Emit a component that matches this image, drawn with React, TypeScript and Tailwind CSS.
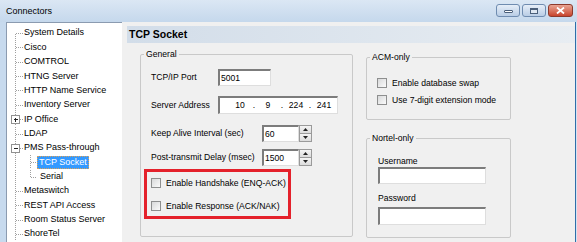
import React from "react";

type TreeItem = {
  label: string;
  box?: "+" | "-";
  child?: boolean;
  last?: boolean;
  selected?: boolean;
};

const TREE: TreeItem[] = [
  { label: "System Details" },
  { label: "Cisco" },
  { label: "COMTROL" },
  { label: "HTNG Server" },
  { label: "HTTP Name Service" },
  { label: "Inventory Server" },
  { label: "IP Office", box: "+" },
  { label: "LDAP" },
  { label: "PMS Pass-through", box: "-" },
  { label: "TCP Socket", child: true, selected: true },
  { label: "Serial", child: true, last: true },
  { label: "Metaswitch" },
  { label: "REST API Access" },
  { label: "Room Status Server" },
  { label: "ShoreTel" },
];

const ROW_H = 14.36;
const DOT = "#a0a0a0";

function TreeGutter({ item, first }: { item: TreeItem; first: boolean }) {
  const mid = 7.5;
  const w = item.child ? 30 : 17;
  return (
    <svg width={w} height={ROW_H} className="shrink-0" shapeRendering="crispEdges">
      <line x1={8.5} y1={first ? mid : 0} x2={8.5} y2={ROW_H} stroke={DOT} strokeDasharray="1 1" />
      {item.child ? (
        <>
          <line x1={23.5} y1={0} x2={23.5} y2={item.last ? mid : ROW_H} stroke={DOT} strokeDasharray="1 1" />
          <line x1={24} y1={mid} x2={30} y2={mid} stroke={DOT} strokeDasharray="1 1" />
        </>
      ) : (
        <line x1={item.box ? 13 : 9} y1={mid} x2={16} y2={mid} stroke={DOT} strokeDasharray="1 1" />
      )}
      {item.box && (
        <>
          <rect x={4.5} y={3.5} width={8} height={8} fill="#fff" stroke="#919191" />
          <line x1={6.5} y1={7.5} x2={11} y2={7.5} stroke="#222" />
          {item.box === "+" && <line x1={8.5} y1={5.5} x2={8.5} y2={10} stroke="#222" />}
        </>
      )}
    </svg>
  );
}

function TextBox({ value, className }: { value?: string; className: string }) {
  return (
    <div
      className={`flex items-center bg-white border-t-2 border-l-2 border-b border-r border-t-[#7c7c7c] border-l-[#7c7c7c] border-b-[#dedede] border-r-[#dedede] pl-[1px] ${className}`}
    >
      {value}
    </div>
  );
}

function Spinner() {
  const btn =
    "flex h-1/2 items-center justify-center bg-linear-to-b from-[#f4f4f4] to-[#dcdcdc] border border-[#9a9a9a]";
  return (
    <div className="flex h-full w-[13px] flex-col">
      <div className={btn}>
        <svg width="5" height="3" viewBox="0 0 5 3">
          <path d="M2.5 0L5 3H0z" fill="#222" />
        </svg>
      </div>
      <div className={`${btn} border-t-0`}>
        <svg width="5" height="3" viewBox="0 0 5 3">
          <path d="M0 0h5L2.5 3z" fill="#222" />
        </svg>
      </div>
    </div>
  );
}

function CheckBox({ label }: { label: string }) {
  return (
    <div className="flex h-[12px] items-center gap-[5px]">
      <div className="h-[10px] w-[10px] shrink-0 border border-[#8e8f8f] bg-linear-to-br from-[#d8d9da] to-[#fbfbfb]" />
      <span>{label}</span>
    </div>
  );
}

export default function App() {
  return (
    <div className="flex h-[242px] w-[577px] flex-col overflow-hidden bg-[#c7daee] font-['Liberation_Sans',Arial,sans-serif] text-black">
      {/* title bar */}
      <div className="flex h-[22px] shrink-0 items-center justify-between bg-linear-to-b from-[#dbe7f4] to-[#c5d8ec] pl-[6px] pr-[4px]">
        <span className="text-[9px] leading-none">Connectors</span>
        <div className="mt-[-1px] flex gap-[2px]">
          <div className="flex h-[13px] w-[24px] items-end justify-center rounded-[3px] border border-[#6f8cb0] bg-linear-to-b from-[#e6eef8] to-[#b9cde5] pb-[3px]">
            <div className="h-[3px] w-[9px] rounded-[1px] border border-[#4a5f7a] bg-white" />
          </div>
          <div className="flex h-[13px] w-[24px] items-center justify-center rounded-[3px] border border-[#6f8cb0] bg-linear-to-b from-[#e6eef8] to-[#b9cde5]">
            <div className="h-[6px] w-[8px] border border-[#4a5f7a] border-t-2 bg-[#dfe8f2]" />
          </div>
          <div className="flex h-[13px] w-[25px] items-center justify-center rounded-[3px] border border-[#8d3a2c] bg-linear-to-b from-[#e8a493] to-[#c7432c]">
            <svg width="9" height="7" viewBox="0 0 9 7">
              <path d="M1 0.5L8 6.5M8 0.5L1 6.5" stroke="#fff" strokeWidth="1.8" />
            </svg>
          </div>
        </div>
      </div>

      <div className="flex min-h-0 flex-1 pl-[6px]">
        {/* tree */}
        <div className="w-[116px] shrink-0 border-l border-t border-[#8b9bb0] bg-white pt-[3px] text-[9px]">
          {TREE.map((item, i) => (
            <div key={item.label} className="flex items-center" style={{ height: ROW_H }}>
              <TreeGutter item={item} first={i === 0} />
              {item.selected ? (
                <span className="flex h-[13px] items-center bg-[#3399ff] px-[2px] text-white outline-1 outline-dotted outline-[#d9a15a] -outline-offset-1">
                  {item.label}
                </span>
              ) : (
                <span className={item.child ? "pl-[3px]" : ""}>{item.label}</span>
              )}
            </div>
          ))}
        </div>

        {/* right panel */}
        <div className="flex min-w-0 flex-1 flex-col bg-[#f0f0f0] text-[8.6px] leading-none">
          <div className="ml-[5px] mt-[4px] flex h-[17px] shrink-0 items-center bg-linear-to-r from-[#d2dde9] to-[#e8edf2] pl-[2px] text-[10.5px] font-bold">
            TCP Socket
          </div>

          <div className="flex items-start pl-[18px] pt-[6px]">
            {/* General */}
            <fieldset className="w-[213px] shrink-0 rounded-[2px] border border-[#c9c9c9] px-[3px] pb-[17px]">
              <legend className="h-[10px] px-[2px] leading-[10px]">General</legend>
              <div className="flex flex-col pl-[7px]">
                <div className="mt-[10px] flex h-[17px] items-center">
                  <span className="w-[67px]">TCP/IP Port</span>
                  <TextBox value="5001" className="h-full w-[53px]" />
                </div>
                <div className="mt-[10px] flex h-[18px] items-center">
                  <span className="w-[67px]">Server Address</span>
                  <div className="flex h-full w-[120px] items-center border-t-2 border-l-2 border-b border-r border-t-[#7c7c7c] border-l-[#7c7c7c] border-b-[#dedede] border-r-[#dedede] bg-white pl-[8px]">
                    <span className="w-[24px] text-center">10</span>
                    <span className="w-[4px] text-center">.</span>
                    <span className="w-[24px] text-center">9</span>
                    <span className="w-[4px] text-center">.</span>
                    <span className="w-[24px] text-center">224</span>
                    <span className="w-[4px] text-center">.</span>
                    <span className="w-[24px] text-center">241</span>
                  </div>
                </div>
                <div className="mt-[11px] flex h-[17px] items-center">
                  <span className="w-[111px]">Keep Alive Interval (sec)</span>
                  <TextBox value="60" className="h-full w-[37px]" />
                  <Spinner />
                </div>
                <div className="mt-[7px] flex h-[17px] items-center">
                  <span className="w-[111px]">Post-transmit Delay (msec)</span>
                  <TextBox value="1500" className="h-full w-[37px]" />
                  <Spinner />
                </div>
                <div className="ml-[-7px] mt-[3px] flex h-[50px] w-[147px] flex-col gap-[11px] border-[3px] border-[#e4212b] pl-[4px] pt-[5px]">
                  <CheckBox label="Enable Handshake (ENQ-ACK)" />
                  <CheckBox label="Enable Response (ACK/NAK)" />
                </div>
              </div>
            </fieldset>

            <div className="ml-[13px] flex w-[145px] shrink-0 flex-col pt-[3px]">
              {/* ACM-only */}
              <fieldset className="rounded-[2px] border border-[#c9c9c9] px-[3px] pb-[13px]">
                <legend className="h-[10px] px-[2px] leading-[10px]">ACM-only</legend>
                <div className="flex flex-col gap-[5px] pl-[7px] pt-[15px]">
                  <CheckBox label="Enable database swap" />
                  <CheckBox label="Use 7-digit extension mode" />
                </div>
              </fieldset>

              {/* Nortel-only */}
              <fieldset className="mt-[13px] rounded-[2px] border border-[#c9c9c9] px-[3px] pb-[12px]">
                <legend className="h-[10px] px-[2px] leading-[10px]">Nortel-only</legend>
                <div className="flex flex-col pl-[8px]">
                  <span className="mt-[13px] h-[10px] leading-[10px]">Username</span>
                  <TextBox className="mt-[1px] h-[17px] w-[108px]" />
                  <span className="mt-[9px] h-[10px] leading-[10px]">Password</span>
                  <TextBox className="mt-[4px] h-[18px] w-[108px]" />
                </div>
              </fieldset>
            </div>
          </div>
        </div>

        <div className="w-px shrink-0 bg-[#2f6ea9]" />
        <div className="w-px shrink-0 bg-[#d6e4f2]" />
      </div>
    </div>
  );
}
